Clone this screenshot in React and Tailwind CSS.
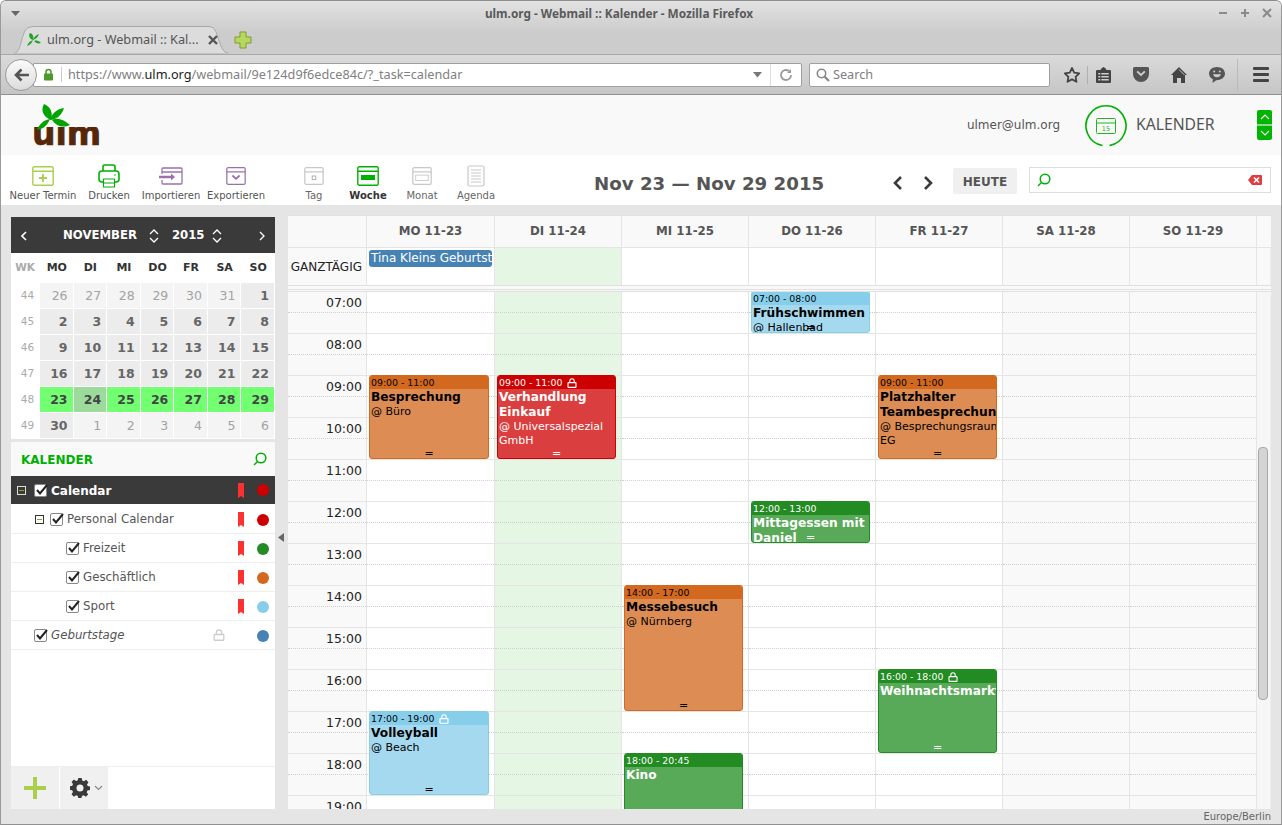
import React from "react";

const DJ = "[font-family:'DejaVu_Sans',sans-serif]";

function Logo() {
  return (
    <svg width="72" height="44" viewBox="0 0 72 44" className="block">
      <defs>
        <clipPath id="lg"><rect x="0" y="23" width="72" height="21" /></clipPath>
      </defs>
      <g clipPath="url(#lg)">
        <text x="-1" y="41" fontFamily="'DejaVu Sans',sans-serif" fontWeight="700" fontSize="33" fill="#55280b" stroke="#55280b" strokeWidth="0.7">ulm</text>
      </g>
      <g fill="#00a400">
        <path d="M11 0 C18 3 20 9 18 16 C11 13 7 7 11 0Z" />
        <path d="M31 4 C29 11 23 16 17 16 C19 9 24 5 31 4Z" />
        <path d="M17 15 C14 22 10 25 4 26 C6 20 11 16 17 15Z" />
        <path d="M19 16 C25 13 31 16 37 21 C30 24 24 23 19 16Z" />
      </g>
    </svg>
  );
}

function Lock({ c = "#fff", s = 10 }) {
  return (
    <svg width={s} height={s} viewBox="0 0 10 10" fill="none" stroke={c} strokeWidth="1.1" className="inline-block">
      <path d="M2.8 4.5V3a2.2 2.2 0 0 1 4.4 0v1.5" />
      <rect x="1" y="4.6" width="8" height="4.8" rx="0.5" />
    </svg>
  );
}

function SearchGlass({ c = "#00b000", s = 14 }) {
  return (
    <svg width={s} height={s} viewBox="0 0 14 14" fill="none" stroke={c} strokeWidth="1.5">
      <circle cx="8" cy="6" r="4.8" />
      <path d="M4.5 9.5 1 13" />
    </svg>
  );
}

function CalBase({ c, w = 22, h = 20, children }) {
  return (
    <svg width={w} height={h} viewBox="0 0 22 20" fill="none" stroke={c} strokeWidth="1.4">
      <rect x="0.8" y="0.8" width="20.4" height="18.4" rx="1.5" />
      <path d="M0.8 5.3h20.4" />
      {children}
    </svg>
  );
}

function ToolItem({ w, label, icon, bold, gray }) {
  return (
    <div className={`${w} flex flex-col items-center`}>
      <div className="h-[25px] flex items-center justify-center">{icon}</div>
      <div className={`mt-[2px] text-[10px] leading-[12px] whitespace-nowrap ${bold ? "font-bold text-[#333]" : gray ? "text-[#666]" : "text-[#555]"}`}>{label}</div>
    </div>
  );
}

const weeks = [
  [44, [[26, 0], [27, 0], [28, 0], [29, 0], [30, 0], [31, 0], [1, 1]]],
  [45, [[2, 1], [3, 1], [4, 1], [5, 1], [6, 1], [7, 1], [8, 1]]],
  [46, [[9, 1], [10, 1], [11, 1], [12, 1], [13, 1], [14, 1], [15, 1]]],
  [47, [[16, 1], [17, 1], [18, 1], [19, 1], [20, 1], [21, 1], [22, 1]]],
  [48, [[23, 2], [24, 3], [25, 2], [26, 2], [27, 2], [28, 2], [29, 2]]],
  [49, [[30, 1], [1, 0], [2, 0], [3, 0], [4, 0], [5, 0], [6, 0]]],
];

const dayCls = [
  "bg-[#f4f4f4] text-[#a3a3a3] font-normal",
  "bg-[#ececec] text-[#666] font-bold",
  "bg-[#72ff72] text-[#444] font-bold",
  "bg-[#9ddb9d] text-[#444] font-bold",
];

function Updown() {
  return (
    <svg width="10" height="14" viewBox="0 0 10 14" fill="none" stroke="#fff" strokeWidth="1.3">
      <path d="M1 5 5 1l4 4M1 9l4 4 4-4" />
    </svg>
  );
}

function MiniCal() {
  return (
    <div className="bg-white h-[222px]">
      <div className="h-[36px] pt-[1px] bg-[#3a3a3a] flex items-center text-white font-bold text-[11.7px] relative">
        <svg width="6" height="10" viewBox="0 0 6 10" fill="none" stroke="#fff" strokeWidth="1.6" className="ml-[10px]"><path d="M5 1 1 5l4 4" /></svg>
        <span className="ml-[36px]">NOVEMBER</span>
        <span className="ml-[12px]"><Updown /></span>
        <span className="ml-[13px]">2015</span>
        <span className="ml-[7px]"><Updown /></span>
        <svg width="6" height="10" viewBox="0 0 6 10" fill="none" stroke="#fff" strokeWidth="1.3" className="ml-auto mr-[10px]"><path d="m1 1 4 4-4 4" /></svg>
      </div>
      <div className="grid grid-cols-[28px_repeat(7,1fr)] gap-x-px pr-px h-[30px] items-center text-[11px] font-bold text-center text-[#333]">
        <div className="text-[#aaa] text-[10.5px]">WK</div>
        {["MO", "DI", "MI", "DO", "FR", "SA", "SO"].map((d) => <div key={d} className="pl-[1px]">{d}</div>)}
      </div>
      <div className="grid grid-cols-[28px_repeat(7,1fr)] gap-x-px gap-y-px pr-px auto-rows-[25px]">
        {weeks.map(([wk, days]) => (
          <React.Fragment key={wk}>
            <div className="text-[10.5px] text-[#aaa] flex items-center justify-center pl-[5px]">{wk}</div>
            {days.map(([n, k], i) => (
              <div key={i} className={`flex items-center justify-end pr-[5px] pt-[1px] text-[12.5px] ${dayCls[k]}`}>{n}</div>
            ))}
          </React.Fragment>
        ))}
      </div>
    </div>
  );
}

function Check() {
  return (
    <span className="relative block w-[13px] h-[13px] shrink-0 border border-[#888] rounded-[2px] bg-white">
      <svg width="14" height="12" viewBox="0 0 14 12" fill="none" stroke="#222" strokeWidth="2" className="absolute left-[0px] top-[-1px]">
        <path d="m2 6 3 3.5L12 1" />
      </svg>
    </span>
  );
}

function Toggle({ className = "" }) {
  return (
    <span className={`relative flex items-center justify-center w-[9px] h-[9px] shrink-0 border ${className}`}>
      <span className="w-[5px] h-px bg-[#8aa81c]" />
    </span>
  );
}

function Mark() {
  return (
    <svg width="6" height="15" viewBox="0 0 6 15" className="block"><path d="M0 0h6v15L3 13 0 15Z" fill="#ff3030" /></svg>
  );
}

const cals = [
  { n: "Personal Calendar", cls: "pl-[24px] h-[30px] pt-[2px]", t: 1, c: "bg-[#cc0000]" },
  { n: "Freizeit", cls: "pl-[55px] h-[29px] pt-[1px]", c: "bg-[#228b22]" },
  { n: "Geschäftlich", cls: "pl-[55px] h-[29px] pt-[1px]", c: "bg-[#d2691e]" },
  { n: "Sport", cls: "pl-[55px] h-[29px] pt-[1px]", c: "bg-[#87ceeb]" },
];

function CalList() {
  return (
    <div className="mt-[3px] flex-1 bg-white flex flex-col">
      <div className="h-[34px] bg-[#f9f9f9] flex items-center justify-between pl-[10px] pr-[8px]">
        <span className="font-bold text-[12px] text-[#00b000] mt-[1px]">KALENDER</span>
        <SearchGlass />
      </div>
      <div className="h-[28px] bg-[#3a3a3a] flex items-center pl-[6px] pr-[6px]">
        <Toggle className="border-[#dddddd] bg-[#3a3a3a]" />
        <span className="ml-[8px]"><Check /></span>
        <span className="ml-[4px] mt-[1px] text-white font-bold text-[12px]">Calendar</span>
        <span className="ml-auto"><Mark /></span>
        <span className="ml-[13px] w-[12px] h-[12px] rounded-full bg-[#cc0000]" />
      </div>
      {cals.map((r) => (
        <div key={r.n} className={`border-b border-[#eeeeee] flex items-center pr-[6px] text-[11.8px] text-[#555] ${r.cls}`}>
          {r.t ? <Toggle className="mr-[6px] border-[#333] bg-white" /> : null}
          <Check />
          <span className="ml-[4px]">{r.n}</span>
          <span className="ml-auto"><Mark /></span>
          <span className={`ml-[13px] w-[12px] h-[12px] rounded-full ${r.c}`} />
        </div>
      ))}
      <div className="h-[29px] pt-[1px] border-b border-[#eeeeee] flex items-center pl-[23px] pr-[6px] text-[11.8px] text-[#555] italic">
        <Check />
        <span className="ml-[4px]">Geburtstage</span>
        <span className="ml-auto mr-[32px]"><Lock c="#ccc" s={12} /></span>
        <span className="w-[12px] h-[12px] rounded-full bg-[#4682b4]" />
      </div>
      <div className="flex-1" />
      <div className="h-[43px] border-t border-[#eeeeee] flex">
        <div className="w-[48px] bg-[#f0f0f0] flex items-center justify-center mr-px">
          <svg width="24" height="24" viewBox="0 0 24 24"><path d="M10 1h4v9h9v4h-9v9h-4v-9H1v-4h9Z" fill="#a9cf4c" /></svg>
        </div>
        <div className="w-[48px] bg-[#f0f0f0] flex items-center pl-[10px] gap-[4px]">
          <svg width="20" height="20" viewBox="0 0 20 20" fill="#3a3a3a">
            <path fillRule="evenodd" d="M8.3 0h3.4l.5 2.6 1.7.7 2.2-1.5 2.4 2.4-1.5 2.2.7 1.7 2.3.5v3.4l-2.6.5-.7 1.7 1.5 2.2-2.4 2.4-2.2-1.5-1.7.7-.5 2.5H8.3l-.5-2.6-1.7-.7-2.2 1.5-2.4-2.4 1.5-2.2-.7-1.7L0 11.7V8.3l2.3-.5.7-1.7L1.5 3.9l2.4-2.4 2.2 1.5 1.7-.7ZM10 6.5a3.5 3.5 0 1 0 0 7 3.5 3.5 0 0 0 0-7Z" />
          </svg>
          <svg width="9" height="6" viewBox="0 0 9 6" fill="none" stroke="#888" strokeWidth="1.2"><path d="m1 1 3.5 3.5L8 1" /></svg>
        </div>
      </div>
    </div>
  );
}

const heads = ["MO 11-23", "DI 11-24", "MI 11-25", "DO 11-26", "FR 11-27", "SA 11-28", "SO 11-29"];
const hours = ["07:00", "08:00", "09:00", "10:00", "11:00", "12:00", "13:00", "14:00", "15:00", "16:00", "17:00", "18:00", "19:00"];
const colBg = ["bg-white", "bg-[#e5f6e5]", "bg-white", "bg-white", "bg-white", "bg-[#f9f9f9]", "bg-[#f9f9f9]"];

const palette = {
  orange: { box: "border-[#d2691e] bg-[#dd8c53] text-black", head: "bg-[#d2691e]" },
  red: { box: "border-[#cc0000] bg-[#db3e3e] text-white", head: "bg-[#cc0000]" },
  green: { box: "border-[#228b22] bg-[#58a958] text-white", head: "bg-[#228b22]" },
  sky: { box: "border-[#87ceeb] bg-[#a5d9ef] text-black", head: "bg-[#87ceeb]" },
};

const events = {
  0: [
    { pos: "top-[83px] h-[84px] w-[120px]", p: "orange", time: "09:00 - 11:00", title: "Besprechung", loc: "@ Büro" },
    { pos: "top-[419px] h-[84px] w-[120px]", p: "sky", time: "17:00 - 19:00", lock: 1, title: "Volleyball", loc: "@ Beach" },
  ],
  1: [
    { pos: "top-[83px] h-[84px] w-[119px]", p: "red", time: "09:00 - 11:00", lock: 1, title: "Verhandlung Einkauf", loc: "@ Universalspezial GmbH" },
  ],
  2: [
    { pos: "top-[293px] h-[126px] w-[119px]", p: "orange", time: "14:00 - 17:00", title: "Messebesuch", loc: "@ Nürnberg" },
    { pos: "top-[461px] h-[115px] w-[119px]", p: "green", time: "18:00 - 20:45", title: "Kino", nohandle: 1 },
  ],
  3: [
    { pos: "top-[-1px] h-[42px] w-[119px]", p: "sky", time: "07:00 - 08:00", title: "Frühschwimmen", loc: "@ Hallenbad" },
    { pos: "top-[209px] h-[42px] w-[119px]", p: "green", time: "12:00 - 13:00", title: "Mittagessen mit Daniel" },
  ],
  4: [
    { pos: "top-[83px] h-[84px] w-[119px]", p: "orange", time: "09:00 - 11:00", title: "Platzhalter Teambesprechung", loc: "@\u00a0Besprechungsraum EG" },
    { pos: "top-[377px] h-[84px] w-[119px]", p: "green", time: "16:00 - 18:00", lock: 1, title: "Weihnachtsmarkt" },
  ],
};

function Event({ e }) {
  const pal = palette[e.p];
  return (
    <div className={`absolute left-[2px] z-10 overflow-hidden rounded-[3px] border ${pal.box} ${e.pos}`}>
      <div className={`h-[13px] pl-[1px] text-[9.4px] leading-[13px] whitespace-nowrap flex items-center gap-[5px] ${pal.head}`}>
        <span>{e.time}</span>
        {e.lock ? <Lock s={10} /> : null}
      </div>
      <div className="px-px overflow-hidden">
        <div className="font-bold text-[12.2px] leading-[15px] mt-[1px]">{e.title}</div>
        {e.loc ? <div className="text-[11px] leading-[14px] mt-[0px]">{e.loc}</div> : null}
      </div>
      {e.nohandle ? null : (
        <div className="absolute bottom-[-1px] left-0 right-0 text-center text-[11px] leading-[10px]">=</div>
      )}
    </div>
  );
}

function Calendar() {
  const grid = "grid grid-cols-[79px_128px_repeat(6,127px)]";
  return (
    <div className="w-[983px] h-[594px] flex flex-col bg-[#f9f9f9] border-t border-[#e0e0e0] overflow-hidden">
      <div className="flex h-[32px] border-b border-[#e5e5e5]">
        <div className={grid}>
          <div className="border-r border-[#e5e5e5]" />
          {heads.map((h) => (
            <div key={h} className="border-r border-[#e5e5e5] flex items-center justify-center pt-[1px] font-bold text-[11.8px] text-[#555]">{h}</div>
          ))}
        </div>
      </div>
      <div className="flex h-[38px] border-b border-[#e0e0e0]">
        <div className={grid}>
          <div className="border-r border-[#e5e5e5] flex items-center justify-end pr-[4px] pt-[1px] text-[12px] text-[#222]">GANZTÄGIG</div>
          {colBg.map((b, i) => (
            <div key={i} className={`border-r border-[#e5e5e5] relative ${b}`}>
              {i === 0 ? (
                <div className="absolute left-[2px] top-[2px] w-[123px] h-[17px] rounded-[3px] bg-[#4682b4] text-white text-[12px] leading-[17px] pl-[2px] whitespace-nowrap overflow-hidden z-10">Tina Kleins Geburtstag</div>
              ) : null}
            </div>
          ))}
        </div>
        <div className="w-[14px] bg-[#f9f9f9] border-r border-[#eeeeee]" />
      </div>
      <div className="h-[5px] bg-[#f9f9f9] flex flex-col justify-end pb-[1px]">
        <div className="h-px bg-[#e0e0e0]" />
      </div>
      <div className="flex-1 flex min-h-0 border-t border-[#e0e0e0]">
        <div className={`${grid} flex-none overflow-hidden`}>
          <div className="border-r border-[#e5e5e5] bg-[#f9f9f9]">
            {hours.map((h) => (
              <div key={h} className="h-[42px] border-b border-[#e5e5e5] flex flex-col">
                <div className="h-[21px] border-b border-dotted border-[#cfcfcf] flex items-center justify-end pr-[4px] pt-[3px] text-[12.5px] text-[#222]">{h}</div>
              </div>
            ))}
          </div>
          {colBg.map((b, i) => (
            <div key={i} className={`relative border-r border-[#e5e5e5] ${b}`}>
              {hours.map((h) => (
                <div key={h} className="h-[42px] border-b border-[#e5e5e5]">
                  <div className="h-[21px] border-b border-dotted border-[#cfcfcf]" />
                </div>
              ))}
              {(events[i] || []).map((e) => <Event key={e.time} e={e} />)}
            </div>
          ))}
        </div>
        <div className="w-[14px] bg-[#f6f6f6] rounded-t-[6px] pt-[155px] pl-[1px] border-r border-[#eeeeee]">
          <div className="w-[10px] h-[253px] rounded-t-[4px] rounded-b-[4px] bg-[#d4d4d4] border border-[#a8a8a8]" />
        </div>
      </div>
    </div>
  );
}

function BrowserChrome() {
  return (
    <div className="h-[94px] shrink-0 flex flex-col [font-family:'Noto_Sans',sans-serif]">
      <div className="h-[53px] bg-gradient-to-b from-[#e2e2e2] to-[#cccccc] to-60% relative">
        <div className="h-[25px] flex items-center relative">
          <svg width="9" height="6" viewBox="0 0 9 6" className="absolute left-[10px] top-[10px]"><path d="M0 0h9L4.5 5Z" fill="#666" /></svg>
          <div className="w-full text-center text-[11.8px] font-bold text-[#5a5a5a] pr-[44px]">ulm.org - Webmail :: Kalender - Mozilla Firefox</div>
          <div className="absolute right-[7px] top-[5px] flex gap-[8px] items-center">
            <svg width="14" height="14" viewBox="0 0 14 14" stroke="#8a8a8a" strokeWidth="2"><path d="M3 7h8" /></svg>
            <svg width="14" height="14" viewBox="0 0 14 14" stroke="#8a8a8a" strokeWidth="2"><path d="M3 7h8M7 3v8" /></svg>
            <svg width="14" height="14" viewBox="0 0 14 14" stroke="#8a8a8a" strokeWidth="2"><path d="m3 3 8 8M11 3l-8 8" /></svg>
          </div>
        </div>
        <div className="flex items-end h-[28px]">
          <div className="relative ml-[13px] w-[216px] h-[28px] flex items-center pl-[12px]">
            <svg width="216" height="28" viewBox="0 0 216 28" className="absolute left-0 top-0">
              <path d="M0 27.5C8 27 7 3 15 1.5 16 1 18 .5 20 .5h174c3 0 5 1 6 2 6 8 5 24 15 25Z" fill="#dcdcdc" stroke="#a8a8a8" />
              <path d="M1 28h214" stroke="#dcdcdc" />
            </svg>
            <svg width="16" height="14" viewBox="0 0 16 14" className="relative" fill="#22a022">
              <path d="M4 0c3 1 4 4 3 7C4 6 2 3 4 0ZM13 1c-1 3-3 5-6 6 1-3 3-5 6-6ZM7 7c-1 3-3 5-6 6 1-3 3-5 6-6ZM8 8c3-1 5 0 7 2-3 1-5 0-7-2Z" />
            </svg>
            <span className="relative ml-[5px] text-[12.7px] text-[#555] whitespace-nowrap">ulm.org - Webmail :: Kal...</span>
            <svg width="10" height="10" viewBox="0 0 10 10" className="relative ml-[9px]" stroke="#555" strokeWidth="2.4"><path d="m1 1 8 8M9 1 1 9" /></svg>
          </div>
          <svg width="18" height="18" viewBox="0 0 18 18" className="ml-[4px] mb-[5px]">
            <path d="M6 1h6v5h5v6h-5v5H6v-5H1V6h5Z" fill="#b6d85c" stroke="#7f9c32" />
          </svg>
        </div>
      </div>
      <div className="h-[41px] bg-gradient-to-b from-[#dadada] to-[#c6c6c6] border-t border-[#a8a8a8] border-b border-b-[#8f8f8f] flex items-center relative">
        <div className="relative z-10 ml-[4px] w-[32px] h-[32px] rounded-full border border-[#9a9a9a] bg-gradient-to-b from-[#fbfbfb] to-[#dcdcdc] flex items-center justify-center">
          <svg width="15" height="14" viewBox="0 0 15 14" fill="none" stroke="#555" strokeWidth="2.6"><path d="M7.5 1.5 2 7l5.5 5.5M2.5 7H15" /></svg>
        </div>
        <div className="-ml-[4px] w-[769px] h-[24px] bg-white border border-[#a0a0a0] rounded-r-[2px] flex items-center pl-[9px] text-[12.7px] text-[#808080] whitespace-nowrap">
          <svg width="11" height="13" viewBox="0 0 11 13" className="shrink-0">
            <path d="M3 6V4a2.5 2.5 0 0 1 5 0v2" fill="none" stroke="#4d9a2a" strokeWidth="1.6" />
            <rect x="1" y="5.5" width="9" height="7" rx="1" fill="#4d9a2a" />
          </svg>
          <span className="w-px h-[15px] bg-[#cccccc] ml-[7px] mr-[6px]" />
          <span>https://www.<span className="text-[#222]">ulm.org</span>/webmail/9e124d9f6edce84c/?_task=calendar</span>
          <svg width="9" height="6" viewBox="0 0 9 6" className="ml-auto"><path d="M0 0h9L4.5 5.5Z" fill="#777" /></svg>
          <span className="w-px h-[22px] bg-[#dddddd] ml-[8px]" />
          <svg width="14" height="14" viewBox="0 0 14 14" fill="none" stroke="#999" strokeWidth="1.8" className="ml-[8px] mr-[8px]">
            <path d="M12 7a5 5 0 1 1-2-4" /><path d="M12 1v4H8" fill="#999" stroke="none" />
          </svg>
        </div>
        <div className="ml-[7px] w-[241px] h-[24px] bg-white border border-[#a0a0a0] rounded-[2px] flex items-center pl-[6px] text-[12.7px] text-[#808080]">
          <svg width="14" height="14" viewBox="0 0 14 14" fill="none" stroke="#888" strokeWidth="1.6"><circle cx="5.5" cy="5.5" r="4.2" /><path d="m8.5 8.5 4.5 4.5" strokeWidth="2.2" /></svg>
          <span className="ml-[3px]">Search</span>
        </div>
        <div className="w-[37px] flex justify-end pr-[6px] ml-0">
          <svg width="18" height="18" viewBox="0 0 18 18" fill="none" stroke="#444" strokeWidth="1.8" strokeLinejoin="round"><path d="m9 2 2.2 4.6 5 .7-3.6 3.500.9 5L9 13.4l-4.5 2.4.9-5L1.8 7.3l5-.7Z" /></svg>
        </div>
        <span className="w-px h-[18px] bg-[#b0b0b0]" />
        <div className="w-[30px] flex justify-center">
          <svg width="15" height="16" viewBox="0 0 15 16"><path fillRule="evenodd" d="M1 3h3.5l.8-1.5L7.5 0l2.2 1.5.8 1.5H14a1 1 0 0 1 1 1v11a1 1 0 0 1-1 1H1a1 1 0 0 1-1-1V4a1 1 0 0 1 1-1Zm1.3 3v1.6h2V6Zm3 0v1.6h7.4V6Zm-3 3v1.6h2V9Zm3 0v1.6h7.4V9Zm-3 3v1.6h2V12Zm3 0v1.6h7.4V12Z" fill="#444" /></svg>
        </div>
        <div className="w-[38px] flex justify-center ml-[4px]">
          <svg width="16" height="15" viewBox="0 0 16 15"><path fillRule="evenodd" d="M1.5 0h13A1.5 1.5 0 0 1 16 1.5V7a8 8 0 0 1-16 0V1.5A1.5 1.5 0 0 1 1.5 0Zm2 5L8 9.3 12.5 5l-1.3-1.3L8 6.8 4.8 3.7Z" fill="#555" /></svg>
        </div>
        <div className="w-[38px] flex justify-center">
          <svg width="16" height="16" viewBox="0 0 16 16" fill="#444"><path d="M8 0 16 8h-2v8H10v-5H6v5H2V8H0Z" /><path d="M8 2.5 13.5 8" stroke="#c8c8c8" fill="none" /></svg>
        </div>
        <div className="w-[38px] flex justify-center">
          <svg width="16" height="16" viewBox="0 0 16 16"><path fillRule="evenodd" d="M8 0c4.4 0 8 2.8 8 6.6s-3.6 6.6-8 6.6h-.8L3.5 16l.4-3.7C1.600 11.200 0 9.100 0 6.600 0 2.800 3.600 0 8 0ZM5.200 3.600a1 1 0 1 0 0 2 1 1 0 0 0 0-2Zm5.600 0a1 1 0 1 0 0 2 1 1 0 0 0 0-2ZM4 7.300c.6 2 2.200 3 4 3s3.400-1 4-3Z" fill="#555" /></svg>
        </div>
        <span className="w-px h-[32px] bg-[#bbbbbb] ml-[1px]" />
        <div className="flex-1 flex justify-center pl-[2px]">
          <div className="flex flex-col gap-[3px]">
            <span className="block w-[16px] h-[3px] rounded-[1px] bg-[#444]" />
            <span className="block w-[16px] h-[3px] rounded-[1px] bg-[#444]" />
            <span className="block w-[16px] h-[3px] rounded-[1px] bg-[#444]" />
          </div>
        </div>
      </div>
    </div>
  );
}

function Header() {
  return (
    <div className={`h-[60px] bg-[#f9f9f9] flex items-center pl-[32px] shrink-0 ${DJ}`}>
      <div className="mb-[-2px]"><Logo /></div>
      <div className="ml-auto text-[12px] text-[#555]">ulmer@ulm.org</div>
      <svg width="42" height="42" viewBox="0 0 42 42" fill="none" className="ml-[25px] mt-[1px]">
        <path d="M17.500 40.500A20 20 0 1 1 24.500 40.500" stroke="#00b000" strokeWidth="1.6" />
        <rect x="11.500" y="13.500" width="19" height="15" rx="1" stroke="#22b522" />
        <path d="M11.500 18h19" stroke="#22b522" />
        <text x="21" y="26" textAnchor="middle" fontSize="6.500" fill="#22b522" fontFamily="'DejaVu Sans',sans-serif">15</text>
      </svg>
      <div className="ml-[9px] text-[15.7px] text-[#555] [font-family:'Noto_Sans',sans-serif] w-[79px] whitespace-nowrap">KALENDER</div>
      <div className="ml-[42px] mr-[9px] w-[15px] h-[30px] rounded-[2px] bg-[#00b400] flex flex-col items-center">
        <div className="h-[14px] flex items-center"><svg width="10" height="6" viewBox="0 0 10 6" fill="none" stroke="#fff" strokeWidth="1.2"><path d="m1 5 4-4 4 4" /></svg></div>
        <div className="w-full h-[2px] bg-[#8fd88f]" />
        <div className="h-[14px] flex items-center"><svg width="10" height="6" viewBox="0 0 10 6" fill="none" stroke="#fff" strokeWidth="1.2"><path d="m1 1 4 4 4-4" /></svg></div>
      </div>
    </div>
  );
}

function Toolbar() {
  const green = "#00b000", lime = "#a9cf4c", purple = "#9b71ab", gray = "#c8c8c8";
  return (
    <div className={`h-[50px] bg-white flex items-start pl-[9px] pt-[8px] shrink-0 ${DJ}`}>
      <ToolItem w="w-[66px]" label="Neuer Termin" icon={<CalBase c={lime}><path d="M11 8v8M7 12h8" strokeWidth="1.8" /></CalBase>} />
      <ToolItem w="w-[66px]" label="Drucken" icon={
        <svg width="22" height="24" viewBox="0 0 22 24" fill="none" stroke={green} strokeWidth="1.6">
          <rect x="5" y="1" width="12" height="7" rx="1.5" />
          <rect x="1" y="7" width="20" height="11" rx="3" fill="#fff" />
          <rect x="5.500" y="15" width="11" height="8" fill="#fff" strokeWidth="1" />
          <path d="M5.500 19h11" strokeWidth="1" />
          <circle cx="17" cy="11" r="0.8" fill={green} stroke="none" />
        </svg>} />
      <ToolItem w="w-[58px]" label="Importieren" icon={
        <svg width="24" height="18" viewBox="0 0 24 18" fill="none" stroke={purple} strokeWidth="1.3">
          <path d="M3 7V2a1 1 0 0 1 1-1h18a1 1 0 0 1 1 1v14a1 1 0 0 1-1 1H4a1 1 0 0 1-1-1v-3" />
          <path d="M3 5h20" />
          <path d="M0 10h12" strokeWidth="2.400" />
          <path d="M12 6.500 16 10l-4 3.500Z" fill={purple} stroke="none" />
        </svg>} />
      <ToolItem w="w-[72px]" label="Exportieren" icon={<CalBase c={purple} h={18}><path d="m7 9.500 4 3.500 4-3.500" strokeWidth="2" /></CalBase>} />
      <div className="w-[15px]" />
      <ToolItem w="w-[54px]" gray label="Tag" icon={<CalBase c={gray} h={18}><rect x="9" y="10" width="4" height="4" strokeWidth="1" stroke="#aaa" /></CalBase>} />
      <ToolItem w="w-[54px]" bold label="Woche" icon={<CalBase c={green}><rect x="4" y="9" width="14" height="5" fill={green} stroke="none" /></CalBase>} />
      <ToolItem w="w-[54px]" gray label="Monat" icon={<CalBase c={gray} h={18}><rect x="4" y="9" width="14" height="6" strokeWidth="1" /></CalBase>} />
      <ToolItem w="w-[54px]" gray label="Agenda" icon={
        <svg width="18" height="22" viewBox="0 0 18 22" fill="none" stroke={gray} strokeWidth="1.2">
          <rect x="1" y="1" width="16" height="20" rx="1.5" />
          <path d="M4 5h10M4 8h10M4 11h10M4 14h10M4 17h10" />
        </svg>} />
      <div className="ml-[91px] w-[229px] mt-[11px] text-[18.2px] leading-[20px] font-bold text-[#555] whitespace-nowrap">Nov 23 — Nov 29 2015</div>
      <svg width="10" height="14" viewBox="0 0 10 14" fill="none" stroke="#3a3a3a" strokeWidth="2.600" className="ml-[70px] mt-[13px]"><path d="M8 1 2 7l6 6" /></svg>
      <svg width="10" height="14" viewBox="0 0 10 14" fill="none" stroke="#3a3a3a" strokeWidth="2.600" className="ml-[20px] mt-[13px]"><path d="m2 1 6 6-6 6" /></svg>
      <div className="ml-[20px] mt-[5px] w-[64px] h-[26px] pt-[1px] bg-[#f0f0f0] rounded-[2px] flex items-center justify-center text-[12px] font-bold text-[#555]">HEUTE</div>
      <div className="ml-[12px] mt-[4px] w-[242px] h-[26px] border border-[#dddddd] flex items-center pl-[7px] pr-[8px] justify-between">
        <SearchGlass s={14} />
        <svg width="14" height="10" viewBox="0 0 14 10"><path d="M4 0h9a1 1 0 0 1 1 1v8a1 1 0 0 1-1 1H4L0 5Z" fill="#dd4040" /><path d="m6 2.500 5 5M11 2.500l-5 5" stroke="#fff" strokeWidth="1.600" /></svg>
      </div>
    </div>
  );
}

export default function App() {
  return (
    <div className="w-[1282px] h-[825px] overflow-hidden rounded-t-[6px] border-x border-y border-x-[#9a9a9a] border-t-[#8c8c8c] border-b-[#909090] flex flex-col bg-[#e5e5e5]">
      <BrowserChrome />
      <Header />
      <Toolbar />
      <div className={`flex-1 min-h-0 relative flex pl-[10px] pt-[10px] ${DJ}`}>
        <div className="w-[264px] h-[594px] pt-[2px] flex flex-col">
          <MiniCal />
          <CalList />
        </div>
        <div className="w-[13px] pt-[318px] pl-[3px]">
          <svg width="6" height="9" viewBox="0 0 6 9"><path d="M6 0v9L0 4.500Z" fill="#666" /></svg>
        </div>
        <Calendar />
        <div className="absolute right-[10px] bottom-[0px] text-[10px] leading-[14px] text-[#666]">Europe/Berlin</div>
      </div>
    </div>
  );
}
